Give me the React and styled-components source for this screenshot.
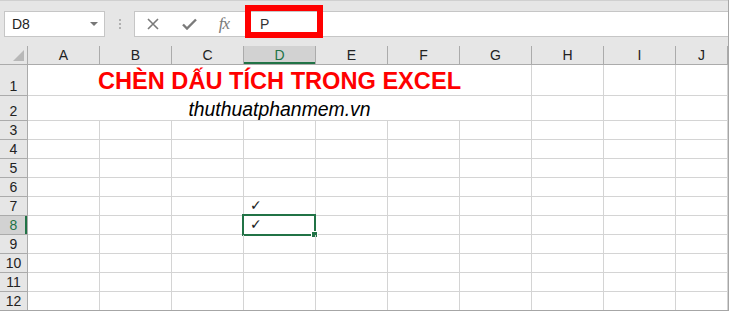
import React from 'react';
import styled, { createGlobalStyle } from 'styled-components';

const GlobalStyle = createGlobalStyle`
  html, body {
    margin: 0;
    padding: 0;
    background: #fff;
  }
  body {
    font-family: "Liberation Sans", Arial, sans-serif;
  }
`;

const COLUMNS = ['A', 'B', 'C', 'D', 'E', 'F', 'G', 'H', 'I', 'J'];
const ROWS = [
  { n: 1, h: 31 },
  { n: 2, h: 25 },
  { n: 3, h: 19 },
  { n: 4, h: 19 },
  { n: 5, h: 19 },
  { n: 6, h: 19 },
  { n: 7, h: 19 },
  { n: 8, h: 19 },
  { n: 9, h: 19 },
  { n: 10, h: 19 },
  { n: 11, h: 19 },
  { n: 12, h: 19 },
];

const Window = styled.div`
  position: relative;
  width: 729px;
  height: 311px;
  box-sizing: border-box;
  background: #e6e6e6;
  border-right: 1px solid #a6a6a6;
  border-bottom: 1px solid #a6a6a6;
  overflow: hidden;
`;

const FormulaArea = styled.div`
  display: flex;
  align-items: center;
  height: 46px;
  box-sizing: border-box;
  padding: 10px 0 10px 4px;
  border-top: 1px solid #d0d0d0;
`;

const NameBox = styled.div`
  display: flex;
  align-items: center;
  justify-content: space-between;
  width: 101px;
  height: 26px;
  box-sizing: border-box;
  background: #fff;
  border: 1px solid #c6c6c6;
  padding: 0 6px 0 7px;
  font-size: 14px;
  color: #222;
`;

const Caret = styled.span`
  width: 0;
  height: 0;
  border-left: 4px solid transparent;
  border-right: 4px solid transparent;
  border-top: 4px solid #777;
`;

const Grip = styled.div`
  display: flex;
  flex-direction: column;
  gap: 2px;
  margin: 0 13px 0 14px;

  span {
    width: 2px;
    height: 2px;
    background: #b0b0b0;
  }
`;

const FormulaBox = styled.div`
  flex: 1;
  display: flex;
  align-items: center;
  height: 26px;
  box-sizing: border-box;
  background: #fff;
  border: 1px solid #c6c6c6;
  border-right: none;
`;

const ToolButton = styled.div`
  display: flex;
  align-items: center;
  justify-content: center;
  width: ${p => p.w}px;
  height: 100%;
  color: #7a7a7a;
`;

const Fx = styled.span`
  font-family: "Liberation Serif", "Times New Roman", serif;
  font-style: italic;
  font-size: 17px;
  color: #7a7a7a;
  letter-spacing: -1px;
`;

const FormulaText = styled.div`
  padding-left: 19px;
  font-size: 14px;
  color: #333;
`;

const Highlight = styled.div`
  position: absolute;
  left: 245px;
  top: 5px;
  width: 78px;
  height: 33px;
  box-sizing: border-box;
  border: 6px solid #ff0000;
`;

const Row = styled.div`
  display: flex;
  height: ${p => p.h}px;
  box-sizing: border-box;
  border-bottom: 1px solid ${p => (p.head ? '#ababab' : '#d4d4d4')};
  background: ${p => (p.head ? '#e6e6e6' : '#fff')};
  ${p => (p.last ? 'border-bottom-color: #a6a6a6;' : '')}
`;

const Corner = styled.div`
  position: relative;
  width: 28px;
  flex: none;
  box-sizing: border-box;
  border-right: 1px solid #ababab;

  &::after {
    content: '';
    position: absolute;
    right: 3px;
    bottom: 3px;
    width: 0;
    height: 0;
    border-left: 11px solid transparent;
    border-bottom: 11px solid #b8b8b8;
  }
`;

const ColHead = styled.div`
  display: flex;
  align-items: flex-end;
  justify-content: center;
  width: ${p => (p.fill ? 'auto' : '72px')};
  flex: ${p => (p.fill ? '1' : 'none')};
  box-sizing: border-box;
  padding-bottom: 1px;
  font-size: 14px;
  color: ${p => (p.active ? '#217346' : '#222')};
  background: ${p => (p.active ? '#d2d2d2' : 'transparent')};
  border-right: 1px solid #ababab;
  box-shadow: ${p => (p.active ? 'inset 0 -2px 0 #217346' : 'none')};
`;

const RowHead = styled.div`
  display: flex;
  align-items: flex-end;
  justify-content: center;
  width: 28px;
  flex: none;
  box-sizing: border-box;
  padding-bottom: 1px;
  font-size: 14px;
  color: ${p => (p.active ? '#217346' : '#222')};
  background: ${p => (p.active ? '#d2d2d2' : '#e6e6e6')};
  border-right: 1px solid #ababab;
  box-shadow: ${p => (p.active ? 'inset -2px 0 0 #217346' : 'none')};
  margin-bottom: -1px;
  border-bottom: 1px solid #ababab;
`;

const Cell = styled.div`
  position: relative;
  display: flex;
  align-items: center;
  width: ${p => (p.fill ? 'auto' : `${72 * (p.span || 1)}px`)};
  flex: ${p => (p.fill ? '1' : 'none')};
  box-sizing: border-box;
  border-right: 1px solid #d4d4d4;
  justify-content: ${p => (p.center ? 'center' : 'flex-start')};
  padding-left: ${p => (p.center ? 0 : 6)}px;
`;

const Title = styled.span`
  font-size: 23.6px;
  font-weight: bold;
  color: #ff0000;
  white-space: nowrap;
  margin-top: 3px;
`;

const Site = styled.span`
  font-size: 19.4px;
  font-style: italic;
  color: #000;
  white-space: nowrap;
  margin-top: 2px;
`;

const Tick = styled.span`
  font-family: "DejaVu Sans", sans-serif;
  font-size: 14px;
  color: #1a1a1a;
  margin-top: -3px;
`;

const Selection = styled.div`
  position: absolute;
  left: -2px;
  top: -2px;
  right: -1px;
  bottom: -2px;
  border: 2px solid #217346;
  pointer-events: none;

  &::after {
    content: '';
    position: absolute;
    right: -4px;
    bottom: -4px;
    width: 5px;
    height: 5px;
    background: #217346;
    border: 1px solid #fff;
  }
`;

function CancelIcon() {
  return (
    <svg width="12" height="12" viewBox="0 0 12 12">
      <path d="M1 1 L11 11 M11 1 L1 11" stroke="#7a7a7a" strokeWidth="1.6" fill="none" />
    </svg>
  );
}

function EnterIcon() {
  return (
    <svg width="15" height="12" viewBox="0 0 15 12">
      <path d="M1 6.5 L5 10.5 L14 1.5" stroke="#7a7a7a" strokeWidth="2.4" fill="none" />
    </svg>
  );
}

function renderCells(n) {
  if (n === 1 || n === 2) {
    return [
      <Cell key="AG" span={7} center>
        {n === 1 ? <Title>CHÈN DẤU TÍCH TRONG EXCEL</Title> : <Site>thuthuatphanmem.vn</Site>}
      </Cell>,
      <Cell key="H" />,
      <Cell key="I" />,
      <Cell key="J" fill />,
    ];
  }
  return COLUMNS.map(c => (
    <Cell key={c} fill={c === 'J'}>
      {c === 'D' && (n === 7 || n === 8) ? <Tick>✓</Tick> : null}
      {c === 'D' && n === 8 ? <Selection /> : null}
    </Cell>
  ));
}

export default function App() {
  return (
    <>
      <GlobalStyle />
      <Window>
        <FormulaArea>
          <NameBox>
            D8
            <Caret />
          </NameBox>
          <Grip>
            <span />
            <span />
            <span />
          </Grip>
          <FormulaBox>
            <ToolButton w={36}>
              <CancelIcon />
            </ToolButton>
            <ToolButton w={36}>
              <EnterIcon />
            </ToolButton>
            <ToolButton w={34}>
              <Fx>fx</Fx>
            </ToolButton>
            <FormulaText>P</FormulaText>
          </FormulaBox>
        </FormulaArea>
        <Highlight />
        <Row h={19} head>
          <Corner />
          {COLUMNS.map(c => (
            <ColHead key={c} active={c === 'D'} fill={c === 'J'}>
              {c}
            </ColHead>
          ))}
        </Row>
        {ROWS.map(r => (
          <Row key={r.n} h={r.h} last={r.n === 12}>
            <RowHead active={r.n === 8}>{r.n}</RowHead>
            {renderCells(r.n)}
          </Row>
        ))}
      </Window>
    </>
  );
}
